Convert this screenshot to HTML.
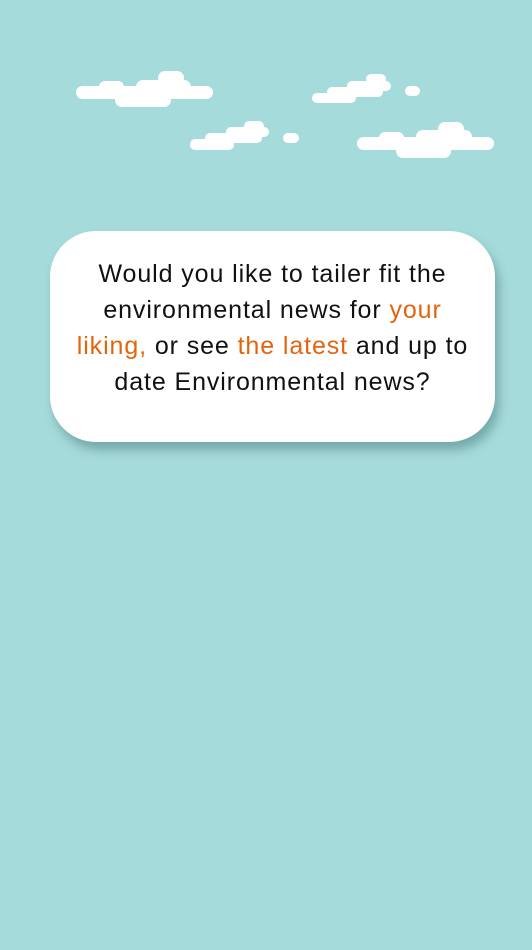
<!DOCTYPE html>
<html><head><style>
html,body{margin:0;padding:0}
body{width:532px;height:950px;background:#a6dbdb;position:relative;overflow:hidden;font-family:"Liberation Sans","DejaVu Sans",sans-serif}
.c{position:absolute;background:#fff;border-radius:7px}
.card{position:absolute;left:50px;top:231px;width:445px;height:211px;background:#fff;border-radius:46px;box-shadow:4px 8px 10px rgba(60,110,110,.45);box-sizing:border-box;padding:25px 0 0;text-align:center;font-size:25px;letter-spacing:0.9px;line-height:36px;color:#111;white-space:nowrap}
.o{color:#e3640f}
</style></head><body>
<div class="c" style="left:76px;top:86px;width:137px;height:13px"></div>
<div class="c" style="left:99px;top:81px;width:25px;height:12px"></div>
<div class="c" style="left:136px;top:80px;width:55px;height:14px"></div>
<div class="c" style="left:158px;top:71px;width:26px;height:14px"></div>
<div class="c" style="left:115px;top:93px;width:56px;height:14px"></div>
<div class="c" style="left:312px;top:93px;width:44px;height:10px;border-radius:5px"></div>
<div class="c" style="left:327px;top:87px;width:56px;height:10px;border-radius:5px"></div>
<div class="c" style="left:347px;top:81px;width:44px;height:10px;border-radius:5px"></div>
<div class="c" style="left:366px;top:74px;width:20px;height:10px;border-radius:5px"></div>
<div class="c" style="left:405px;top:86px;width:15px;height:10px;border-radius:5px"></div>
<div class="c" style="left:190px;top:139px;width:44px;height:11px;border-radius:5px"></div>
<div class="c" style="left:205px;top:133px;width:57px;height:10px;border-radius:5px"></div>
<div class="c" style="left:226px;top:127px;width:43px;height:10px;border-radius:5px"></div>
<div class="c" style="left:244px;top:121px;width:20px;height:10px;border-radius:5px"></div>
<div class="c" style="left:283px;top:133px;width:16px;height:10px;border-radius:5px"></div>
<div class="c" style="left:357px;top:137px;width:137px;height:13px"></div>
<div class="c" style="left:379px;top:132px;width:25px;height:12px"></div>
<div class="c" style="left:416px;top:130px;width:56px;height:14px"></div>
<div class="c" style="left:438px;top:122px;width:26px;height:14px"></div>
<div class="c" style="left:396px;top:144px;width:55px;height:14px"></div>

<div class="card">Would you like to tailer fit the<br>environmental news for <span class="o">your</span><br><span class="o">liking,</span> or see <span class="o">the latest</span> and up to<br>date Environmental news?</div>
</body></html>
